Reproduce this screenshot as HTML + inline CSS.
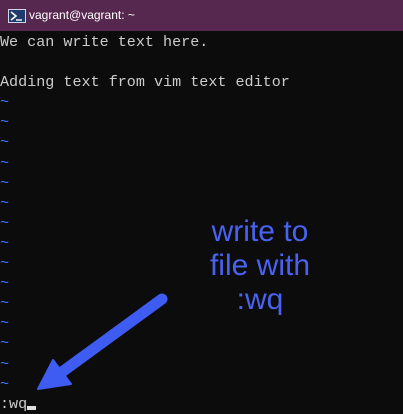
<!DOCTYPE html>
<html><head><style>
html,body{margin:0;padding:0;width:403px;height:412px;overflow:hidden;background:#0c0c0c;}
.title{position:absolute;left:0;top:0;width:403px;height:31px;background:#57284f;}
.title span{position:absolute;left:29px;top:8px;font:12px "Liberation Sans",sans-serif;color:#fff;}
.term{position:absolute;left:0;top:32px;font:15.1px/20.1px "Liberation Mono",monospace;color:#cccccc;white-space:pre;}
.t{color:#3b78ff;}
.cur{display:inline-block;width:9px;height:4px;background:#ddd;vertical-align:-2px;}
.note{position:absolute;left:190px;top:215px;width:140px;text-align:center;font:30px/34px "Liberation Sans",sans-serif;color:#4a62f2;}
</style></head><body>
<div class="title">
<svg width="18" height="16" style="position:absolute;left:8px;top:8px" viewBox="0 0 18 16"><rect x="0.5" y="1.5" width="17" height="13" fill="#1e3b6e" stroke="#cfd6e6"/><path d="M3 4l5 4-5 4" stroke="#fff" stroke-width="1.6" fill="none"/><path d="M8 12h6" stroke="#fff" stroke-width="1.4"/></svg>
<span>vagrant@vagrant: ~</span></div>
<div class="term">We can write text here.

Adding text from vim text editor
<span class="t">~
~
~
~
~
~
~
~
~
~
~
~
~
~
~</span>
:wq<span class="cur"></span></div>
<div class="note">write to<br>file with<br>:wq</div>
<svg width="403" height="412" style="position:absolute;left:0;top:0">
<line x1="162" y1="299" x2="62" y2="372" stroke="#3f5cf2" stroke-width="11" stroke-linecap="round"/>
<polygon points="38,389 53,360 71,384" fill="#3f5cf2" stroke="#3f5cf2" stroke-width="2" stroke-linejoin="round"/>
</svg>
</body></html>
